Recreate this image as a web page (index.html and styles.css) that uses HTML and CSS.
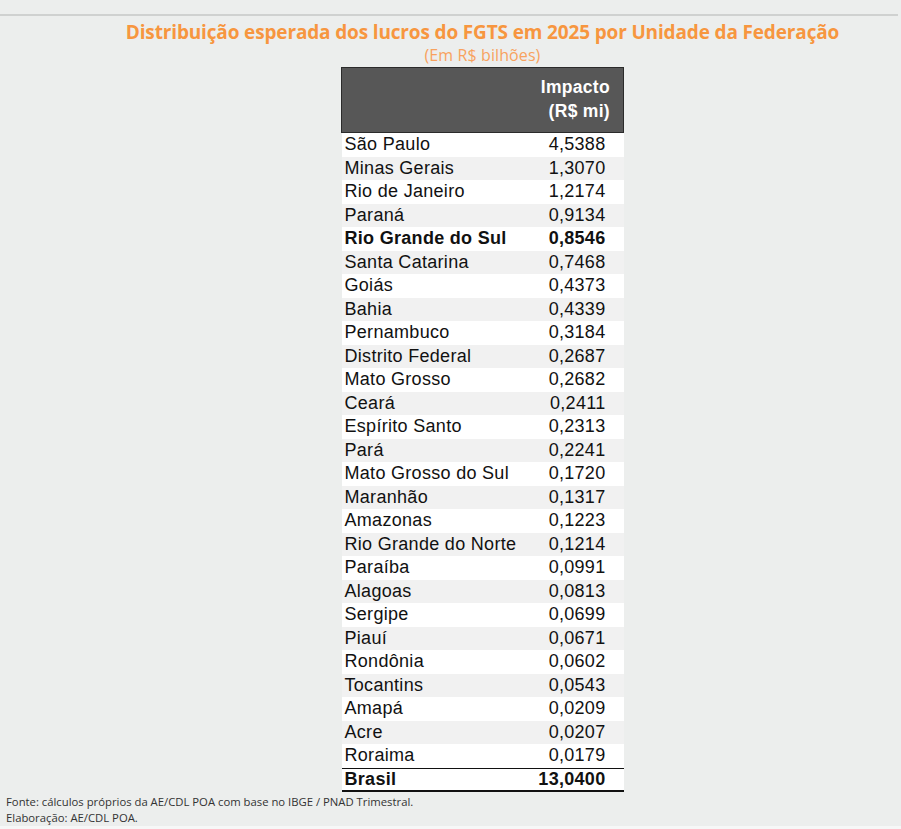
FILE: index.html
```html
<!DOCTYPE html>
<html lang="pt-BR">
<head>
<meta charset="utf-8">
<title>Distribuição esperada dos lucros do FGTS em 2025</title>
<link rel="stylesheet" href="styles.css">
</head>
<body>
<div class="page">
  <div class="topline"></div>
  <div class="center">
    <h1 class="title">Distribuição esperada dos lucros do FGTS em 2025 por Unidade da Federação</h1>
    <div class="subtitle">(Em R$ bilhões)</div>
    <table class="data">
      <thead>
        <tr><th class="h-name"></th><th class="h-val">Impacto<br>(R$ mi)</th></tr>
      </thead>
      <tbody>
        <tr><td class="name">São Paulo</td><td class="val">4,5388</td></tr>
        <tr><td class="name">Minas Gerais</td><td class="val">1,3070</td></tr>
        <tr><td class="name">Rio de Janeiro</td><td class="val">1,2174</td></tr>
        <tr><td class="name">Paraná</td><td class="val">0,9134</td></tr>
        <tr class="strong"><td class="name">Rio Grande do Sul</td><td class="val">0,8546</td></tr>
        <tr><td class="name">Santa Catarina</td><td class="val">0,7468</td></tr>
        <tr><td class="name">Goiás</td><td class="val">0,4373</td></tr>
        <tr><td class="name">Bahia</td><td class="val">0,4339</td></tr>
        <tr><td class="name">Pernambuco</td><td class="val">0,3184</td></tr>
        <tr><td class="name">Distrito Federal</td><td class="val">0,2687</td></tr>
        <tr><td class="name">Mato Grosso</td><td class="val">0,2682</td></tr>
        <tr><td class="name">Ceará</td><td class="val">0,2411</td></tr>
        <tr><td class="name">Espírito Santo</td><td class="val">0,2313</td></tr>
        <tr><td class="name">Pará</td><td class="val">0,2241</td></tr>
        <tr><td class="name">Mato Grosso do Sul</td><td class="val">0,1720</td></tr>
        <tr><td class="name">Maranhão</td><td class="val">0,1317</td></tr>
        <tr><td class="name">Amazonas</td><td class="val">0,1223</td></tr>
        <tr><td class="name">Rio Grande do Norte</td><td class="val">0,1214</td></tr>
        <tr><td class="name">Paraíba</td><td class="val">0,0991</td></tr>
        <tr><td class="name">Alagoas</td><td class="val">0,0813</td></tr>
        <tr><td class="name">Sergipe</td><td class="val">0,0699</td></tr>
        <tr><td class="name">Piauí</td><td class="val">0,0671</td></tr>
        <tr><td class="name">Rondônia</td><td class="val">0,0602</td></tr>
        <tr><td class="name">Tocantins</td><td class="val">0,0543</td></tr>
        <tr><td class="name">Amapá</td><td class="val">0,0209</td></tr>
        <tr><td class="name">Acre</td><td class="val">0,0207</td></tr>
        <tr><td class="name">Roraima</td><td class="val">0,0179</td></tr>
      </tbody>
      <tfoot>
        <tr class="total"><td class="name">Brasil</td><td class="val">13,0400</td></tr>
      </tfoot>
    </table>
  </div>
  <div class="notes">
    <p>Fonte: cálculos próprios da AE/CDL POA com base no IBGE / PNAD Trimestral.</p>
    <p>Elaboração: AE/CDL POA.</p>
  </div>
  <div class="bottom-strip"></div>
</div>
</body>
</html>
```

FILE: styles.css
```css
html, body {
  margin: 0;
  padding: 0;
  background: #eceeed;
}

.page {
  width: 901px;
  height: 829px;
  display: flex;
  flex-direction: column;
  overflow: hidden;
}

.topline {
  flex: 0 0 2px;
  height: 2px;
  margin-top: 14px;
  margin-right: 3px;
  background: #cfd1d0;
}

.center {
  display: flex;
  flex-direction: column;
  align-items: center;
  padding-left: 64px;
}

.title {
  margin: 4px 0 0 0;
  font-family: "Open Sans", sans-serif;
  font-weight: 700;
  font-size: 19px;
  letter-spacing: -0.15px;
  line-height: 24px;
  color: #f7963f;
  white-space: nowrap;
}

.subtitle {
  margin-top: 1px;
  font-family: "Open Sans", sans-serif;
  font-size: 16px;
  letter-spacing: 0.1px;
  line-height: 20px;
  color: #f8a25e;
}

.data {
  margin-top: 2px;
  width: 283px;
  border-collapse: collapse;
  font-family: "Liberation Sans", Arial, sans-serif;
  font-size: 18px;
  letter-spacing: 0.3px;
  color: #111;
}

.data thead th {
  background: #575757;
  border-top: 1px solid #2b2b2b;
  border-bottom: 1px solid #2b2b2b;
  height: 55px;
  padding: 0;
}

.h-name { border-left: 1px solid #2b2b2b; }

.h-val {
  border-right: 1px solid #2b2b2b;
  text-align: right;
  vertical-align: bottom;
  color: #fff;
  font-weight: 700;
  font-size: 17.5px;
  line-height: 24px;
  padding-right: 13px !important;
  padding-bottom: 9px !important;
}

.data td {
  height: 23.5px;
  padding: 0;
  line-height: 23.5px;
}

.data tbody tr:nth-child(odd) td { background: #ffffff; }
.data tbody tr:nth-child(even) td { background: #f1f1f1; }

.name {
  padding-left: 3px !important;
  text-align: left;
  white-space: nowrap;
}

.val {
  text-align: right;
  padding-right: 18px !important;
}

.strong td { font-weight: 700; }

.total td {
  font-weight: 700;
  background: #ffffff;
  border-top: 1px solid #111;
  border-bottom: 2px solid #111;
  height: 21px;
  line-height: 21px;
}

.notes {
  margin-top: 2px;
  padding-left: 6px;
  font-family: "Open Sans", sans-serif;
  font-size: 11.3px;
  line-height: 16px;
  color: #333;
}

.notes p { margin: 0; white-space: nowrap; }

.bottom-strip {
  flex: 0 0 5px;
  margin-top: auto;
  height: 5px;
  background: #f6f7f7;
}
```
